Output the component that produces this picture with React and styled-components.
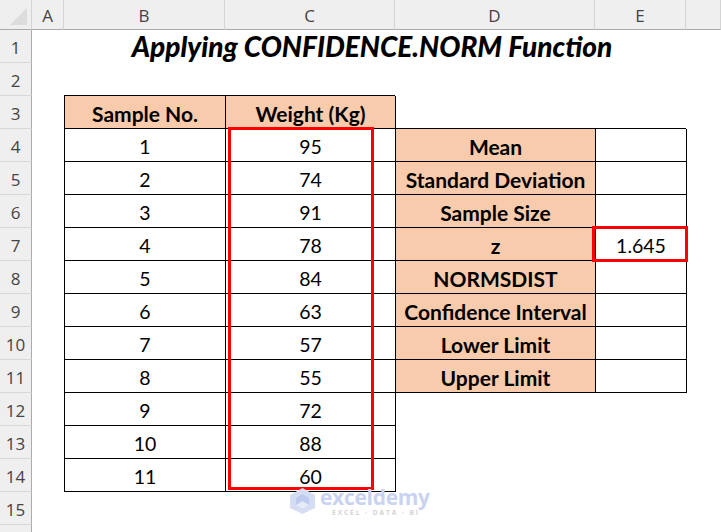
import React from 'react';
import styled, { createGlobalStyle } from 'styled-components';

const GlobalStyle = createGlobalStyle`
  html, body {
    margin: 0;
    padding: 0;
    background: #ffffff;
    overflow: hidden;
  }
  body {
    font-family: Lato, "Open Sans", sans-serif;
  }
`;

const Sheet = styled.div`
  display: grid;
  grid-template-columns: 32px 32px 161px 170px 200px 91px 1fr;
  grid-template-rows: 30px repeat(16, 33px);
  width: 721px;
  height: 532px;
  overflow: hidden;
  position: relative;
  background: #ffffff;
`;

const Corner = styled.div`
  background: #efefef;
  border-right: 1px solid #d4d4d4;
  border-bottom: 1px solid #ababab;
  box-sizing: border-box;
  position: relative;

  &::after {
    content: '';
    position: absolute;
    right: 4px;
    bottom: 4px;
    width: 0;
    height: 0;
    border-left: 17px solid transparent;
    border-bottom: 17px solid #dcdcdc;
  }
`;

const ColHead = styled.div`
  background: #efefef;
  border-right: 1px solid #d4d4d4;
  border-bottom: 1px solid #ababab;
  box-sizing: border-box;
  display: flex;
  align-items: center;
  justify-content: center;
  color: #444;
  font-family: "Open Sans", sans-serif;
  font-size: 17px;
  padding-top: 1px;
`;

const RowHead = styled.div`
  background: #efefef;
  border-right: 1px solid #ababab;
  border-bottom: 1px solid #d8d8d8;
  box-sizing: border-box;
  display: flex;
  align-items: center;
  justify-content: center;
  color: #444;
  font-family: "Open Sans", sans-serif;
  font-size: 17px;
  padding-top: 3px;
  grid-column: 1;
`;

const Title = styled.h1`
  grid-column: 3 / 7;
  grid-row: 2;
  margin: 0;
  display: flex;
  align-items: center;
  justify-content: center;
  font-family: Lato, sans-serif;
  font-style: italic;
  font-weight: 900;
  font-size: 28px;
  color: #000;
  padding-right: 6px;
  padding-bottom: 2px;
`;

const Table = styled.div`
  grid-column: ${({ $col }) => $col};
  grid-row: ${({ $row }) => $row};
  display: grid;
  grid-template-columns: ${({ $cols }) => $cols};
  grid-auto-rows: 33px;
  border-left: 1px solid #000;
  border-top: 1px solid #000;
  box-sizing: border-box;
  position: relative;
  align-self: start;
  margin-top: -1px;
`;

const Cell = styled.div`
  border-right: 1px solid #000;
  border-bottom: 1px solid #000;
  box-sizing: border-box;
  display: flex;
  align-items: center;
  justify-content: center;
  font-family: Lato, sans-serif;
  font-size: ${({ $head }) => ($head ? '21px' : '19.5px')};
  font-weight: ${({ $head }) => ($head ? 700 : 400)};
  background: ${({ $head }) => ($head ? '#f8cbad' : '#ffffff')};
  color: #000;
  padding-top: 3px;
  white-space: nowrap;
`;

const Highlight = styled.div`
  position: absolute;
  border: 3px solid #ff0000;
  box-sizing: border-box;
  pointer-events: none;
`;

const Watermark = styled.div`
  position: absolute;
  left: 289px;
  top: 487px;
  display: flex;
  align-items: flex-start;
  gap: 4px;
`;

const Brand = styled.div`
  display: flex;
  flex-direction: column;
  padding-top: 1px;
`;

const BrandName = styled.span`
  font-family: "Open Sans", sans-serif;
  font-weight: 700;
  font-size: 21px;
  line-height: 18px;
  color: #c9d3f0;
  letter-spacing: -0.3px;
`;

const BrandTag = styled.span`
  font-family: "Open Sans", sans-serif;
  font-weight: 700;
  font-size: 6.5px;
  line-height: 7px;
  color: #d3d3d3;
  letter-spacing: 2px;
  margin: 3px 0 0 12px;
`;

const samples = [95, 74, 91, 78, 84, 63, 57, 55, 72, 88, 60];
const labels = [
  'Mean',
  'Standard Deviation',
  'Sample Size',
  'z',
  'NORMSDIST',
  'Confidence Interval',
  'Lower Limit',
  'Upper Limit',
];
const columns = ['A', 'B', 'C', 'D', 'E', ''];

const Logo = () => (
  <svg width="27" height="28" viewBox="0 0 27 28">
    <polygon points="13.5,1 26,8 26,21 13.5,27 1,21 1,8" fill="#d5ddf3" />
    <polygon points="13.5,7 20,11 20,18 13.5,22 7,18 7,11" fill="#bfcbee" />
    <polygon points="13.5,14 20,18 13.5,22 7,18" fill="#e6ebf8" />
  </svg>
);

export default function App() {
  return (
    <>
      <GlobalStyle />
      <Sheet>
        <Corner />
        {columns.map((c, i) => (
          <ColHead key={i}>{c}</ColHead>
        ))}
        {Array.from({ length: 16 }, (_, i) => (
          <RowHead key={i} style={{ gridRow: i + 2 }}>
            {i < 15 ? i + 1 : ''}
          </RowHead>
        ))}

        <Title>Applying CONFIDENCE.NORM Function</Title>

        <Table $col="3 / 5" $row="4 / 16" $cols="161px 170px">
          <Cell $head>Sample No.</Cell>
          <Cell $head>Weight (Kg)</Cell>
          {samples.map((w, i) => (
            <React.Fragment key={i}>
              <Cell>{i + 1}</Cell>
              <Cell>{w}</Cell>
            </React.Fragment>
          ))}
          <Highlight style={{ left: 163, top: 31, width: 146, height: 363 }} />
        </Table>

        <Table $col="5 / 7" $row="5 / 13" $cols="200px 91px">
          {labels.map((l) => (
            <React.Fragment key={l}>
              <Cell $head>{l}</Cell>
              <Cell>{l === 'z' ? '1.645' : ''}</Cell>
            </React.Fragment>
          ))}
          <Highlight style={{ left: 196, top: 97, width: 96, height: 36 }} />
        </Table>

        <Watermark>
          <Logo />
          <Brand>
            <BrandName>exceldemy</BrandName>
            <BrandTag>EXCEL · DATA · BI</BrandTag>
          </Brand>
        </Watermark>
      </Sheet>
    </>
  );
}
